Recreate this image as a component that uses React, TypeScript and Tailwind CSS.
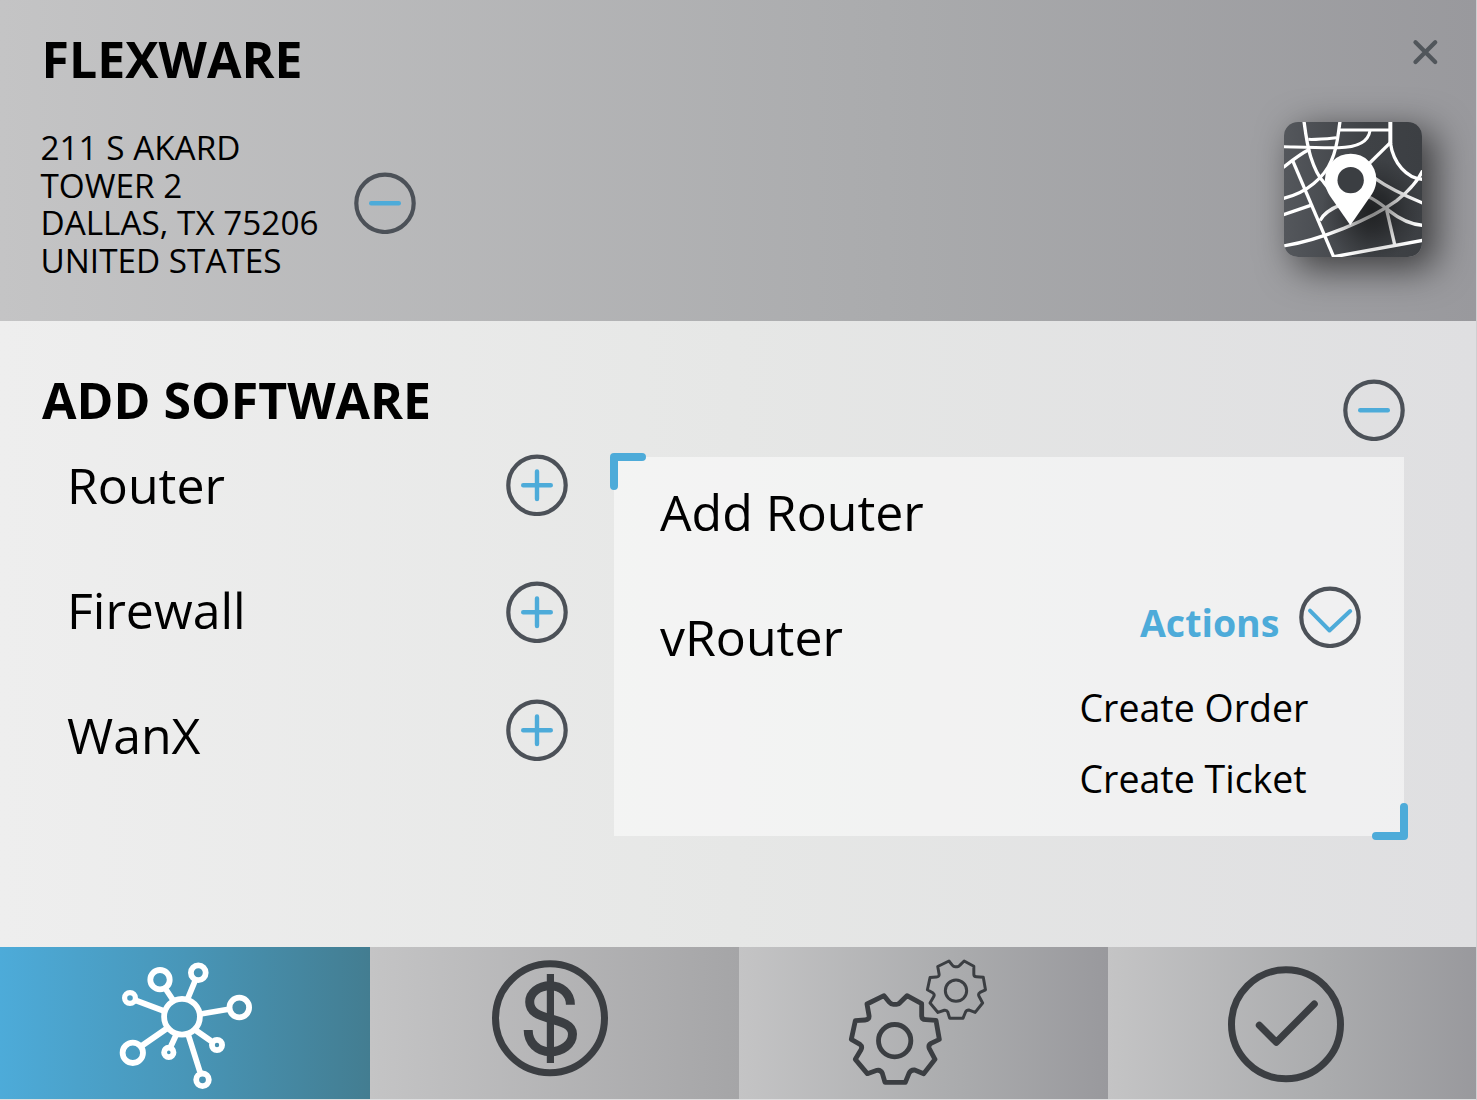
import type { ReactNode } from "react";

const BLUE = "#4dabd9";
const SLATE = "#4c5158";
const INK = "#3b3e42";

function RoundButton({ label, children, className = "" }: { label: string; children: ReactNode; className?: string }) {
  return (
    <button type="button" aria-label={label} className={`block size-[62px] shrink-0 ${className}`}>
      <svg viewBox="0 0 62 62" className="size-full" fill="none" strokeLinecap="round">
        <circle cx="31" cy="31.300" r="28.7" stroke={SLATE} strokeWidth="4.2" />
        <g stroke={BLUE} strokeWidth="4.4">{children}</g>
      </svg>
    </button>
  );
}

const Minus = () => <path d="M17.2 31.300H44.8" />;
const Plus = () => <path d="M17.2 31.300H44.8M31 17.500V45.100" />;

function MapTile() {
  return (
    <div className="h-[135px] w-[138px] overflow-hidden rounded-[14px] shadow-[12px_10px_36px_2px_rgba(0,0,0,0.6)]">
      <svg viewBox="42 36 414 405" preserveAspectRatio="none" className="size-full" fill="none">
        <defs>
          <linearGradient id="tile" x1="0" y1="0" x2="1" y2="0">
            <stop offset="0" stopColor="#54575c" />
            <stop offset="0.6" stopColor="#3f4246" />
            <stop offset="1" stopColor="#3c3f43" />
          </linearGradient>
          <radialGradient id="pinShade">
            <stop offset="0" stopColor="#000" stopOpacity="0.5" />
            <stop offset="0.35" stopColor="#000" stopOpacity="0.36" />
            <stop offset="0.7" stopColor="#000" stopOpacity="0.14" />
            <stop offset="1" stopColor="#000" stopOpacity="0" />
          </radialGradient>
        </defs>
        <rect x="42" y="36" width="414" height="405" fill="url(#tile)" />
        <g stroke="#fff" strokeWidth="10">
          <path d="M102 34C108 80 112 110 122 140C135 180 145 200 160 215C175 235 190 255 200 265" />
          <path d="M210 34C203 80 203 110 185 150C165 200 110 250 40 265" />
          <path d="M208 60H361" strokeWidth="9" />
          <path d="M361 34V102" strokeWidth="12" />
          <path d="M361 98C370 160 410 205 458 208" />
          <path d="M361 98L290 168" />
          <path d="M300 62C295 95 260 112 205 113C150 114 80 111 40 110" strokeWidth="9" />
          <path d="M115 88C145 89 170 86 199 83" strokeWidth="9" />
          <path d="M120 117C95 130 65 152 40 172" />
          <path d="M68 152L192 443" />
          <path d="M40 314L122 286" />
          <path d="M40 408C150 390 300 330 380 272C420 240 445 210 458 182" />
          <path d="M315 205C350 230 400 255 458 279" />
          <path d="M290 258C320 270 340 288 360 304C395 332 425 343 458 346" />
          <path d="M350 300L374 404" />
          <path d="M188 441L458 391" />
          <path d="M150 332C160 310 185 295 215 283" />
        </g>
        <ellipse cx="305" cy="300" rx="150" ry="155" fill="url(#pinShade)" />
        <path d="M241 346L180 258C168 240 165 225 165 208A77 77 0 0 1 319 208C319 228 313 240 306 252Z" fill="#fff" />
        <circle cx="242" cy="210.500" r="39.500" fill={INK} />
      </svg>
    </div>
  );
}

const GEAR =
  "M162 152L178 172Q183 178 190 178H200Q206 178 211 172L231 152L275 176V212Q275 224 287 224L318 226L328 283L303 295Q294 300 298 311L315 343L281 386L254 375Q242 374 237 385L226 412H165L157 385Q152 374 141 376L112 386L76 343L93 314Q98 304 90 298L64 283L76 227L105 225Q119 224 117 211L111 177Z";

const tabs = [
  {
    label: "Network",
    bg: "bg-linear-to-r from-[#4dabd9] via-[#4896b8] to-[#437d91]",
    icon: (
      <svg viewBox="116 958 140 134" className="mt-[11px] ml-[116px] h-[134px] w-[140px]" fill="none" stroke="#fff" strokeWidth="5.8">
        <circle cx="182" cy="1016.700" r="17.900" />
        <circle cx="160" cy="979.700" r="9.700" />
        <circle cx="198.300" cy="972.700" r="7.400" />
        <circle cx="130" cy="998" r="5.400" strokeWidth="5.200" />
        <circle cx="239.300" cy="1007.500" r="9.800" />
        <circle cx="132.800" cy="1052.800" r="10.200" />
        <circle cx="168.800" cy="1052.400" r="4.700" />
        <circle cx="217" cy="1045" r="5.100" />
        <circle cx="202.500" cy="1079.800" r="6.300" />
        <path d="M165 988L173 1000M195 981L188 998M136 1000.500L164 1011M230 1009L200.500 1014M141.500 1046L167.500 1028M171 1046L177 1033M211 1041L196 1030.500M200 1072L188 1034" />
      </svg>
    ),
  },
  {
    label: "Billing",
    bg: "bg-linear-to-r from-[#c4c4c5] to-[#a5a5a7]",
    icon: (
      <svg viewBox="490 958 120 120" className="mt-[11px] ml-[120px] size-[120px]" fill="none" stroke={INK}>
        <circle cx="550" cy="1018.300" r="54.500" strokeWidth="7" />
        <path d="M550.400 974V1063" strokeWidth="7.200" />
        <path
          d="M570.400 1004.700C570.400 993 561 985.800 550 985.800C538.500 985.800 529.700 993 529.700 1002C529.700 1012 538.500 1015.500 550 1018.600C562 1021.800 572.500 1025 572.500 1034C572.500 1044 562.500 1051.800 550 1051.800C538 1051.800 528.200 1043 528.200 1030"
          strokeWidth="9"
        />
      </svg>
    ),
  },
  {
    label: "Settings",
    bg: "bg-linear-to-r from-[#c4c4c5] via-[#aaabad] via-60% to-[#99999d]",
    icon: (
      <svg viewBox="48 39 426 387" className="mt-[11px] ml-[107px] h-[129px] w-[142px]" fill="none" stroke={INK} strokeWidth="14.500" strokeLinejoin="round">
        <path d={GEAR} />
        <circle cx="194" cy="287" r="48.500" />
        <g transform="translate(378 137) scale(0.66) translate(-194 -287)" strokeWidth="13.500">
          <path d={GEAR} />
          <circle cx="194" cy="287" r="48.500" />
        </g>
      </svg>
    ),
  },
  {
    label: "Confirm",
    bg: "bg-linear-to-r from-[#c4c4c5] via-[#aaabad] via-60% to-[#99999d]",
    icon: (
      <svg viewBox="1226 964 120 120" className="mt-[17px] ml-[118px] size-[120px]" fill="none" stroke={INK} strokeWidth="7">
        <circle cx="1286" cy="1024.300" r="54.500" />
        <path d="M1259.300 1025.300L1276.300 1042.300L1314.300 1004" strokeLinecap="round" strokeLinejoin="round" />
      </svg>
    ),
  },
];

export default function App() {
  return (
    <div className="flex h-[1100px] w-[1477px] flex-col overflow-hidden border-r border-[#cfcfd1] bg-[#dededf] font-['Open_Sans',sans-serif] text-black">
      <header className="flex h-[320.5px] shrink-0 justify-between bg-linear-to-r from-[#c4c4c5] via-[#aaabad] via-60% to-[#99999d]">
        <div className="pt-[29px] pl-[41.5px]">
          <h1 className="text-[50px] leading-[60px] font-bold">FLEXWARE</h1>
          <div className="mt-[40px] -ml-px flex">
            <address className="w-[313.500px] text-[33.300px] leading-[37.5px] whitespace-nowrap not-italic">
              211 S AKARD
              <br />
              TOWER 2
              <br />
              DALLAS, TX 75206
              <br />
              UNITED STATES
            </address>
            <RoundButton label="Collapse address" className="mt-[43px]">
              <Minus />
            </RoundButton>
          </div>
        </div>
        <div className="flex flex-col items-end pt-[37px] pr-[54px]">
          <button type="button" aria-label="Close" className="-mr-[18px] size-[30px]">
            <svg viewBox="0 0 30 30" className="size-full" stroke="#51565b" strokeWidth="4.300" strokeLinecap="round">
              <path d="M5.500 5.200L25.200 24.900M25.200 5.200L5.500 24.900" />
            </svg>
          </button>
          <div className="mt-[55px]">
            <MapTile />
          </div>
        </div>
      </header>

      <main className="flex h-[626px] shrink-0 flex-col bg-linear-to-r from-[#eeeeee] via-[#e6e7e6] to-[#dfdfe1]">
        <div className="flex h-[134px] justify-between pr-[71.500px] pl-[42px]">
          <h2 className="pt-[49.300px] text-[50px] leading-[60px] font-bold">ADD SOFTWARE</h2>
          <RoundButton label="Collapse software" className="mt-[58.5px]">
            <Minus />
          </RoundButton>
        </div>
        <div className="flex">
          <ul className="w-[439px] space-y-[65px] pt-[0.500px] pl-[67px] text-[50px] leading-[60px]">
            <li>Router</li>
            <li>Firewall</li>
            <li>WanX</li>
          </ul>
          <div className="-mt-[0.500px] ml-[67px] flex w-[62px] flex-col">
            <RoundButton label="Add router">
              <Plus />
            </RoundButton>
            <RoundButton label="Add firewall" className="mt-[65px]">
              <Plus />
            </RoundButton>
            <RoundButton label="Add WanX" className="mt-[56px]">
              <Plus />
            </RoundButton>
          </div>
          <section className="relative mt-[2.500px] ml-[46px] flex h-[379px] w-[790px] justify-between bg-white/50">
            <svg viewBox="0 0 38 38" className="absolute -top-1 -left-1 size-[38px]" fill="none" stroke={BLUE} strokeWidth="8" strokeLinecap="round" strokeLinejoin="round">
              <path d="M32 4H4V33" />
            </svg>
            <svg viewBox="0 0 38 38" className="absolute -right-1 -bottom-1 size-[38px]" fill="none" stroke={BLUE} strokeWidth="8" strokeLinecap="round" strokeLinejoin="round">
              <path d="M34 5V34H6" />
            </svg>
            <div className="pt-[25px] pl-[46px] text-[50px] leading-[60px]">
              <h3>Add Router</h3>
              <p className="mt-[65px]">vRouter</p>
            </div>
            <div className="w-[324.500px] pt-[129px] text-[37.500px] leading-[48px]">
              <div className="flex pl-[60.500px]">
                <span className="w-[159px] pt-[13px] font-bold text-[#4dabd9]">Actions</span>
                <RoundButton label="Toggle actions">
                  <path d="M11 24.700L30.500 44.500L51.200 25" strokeWidth="4" strokeLinejoin="round" />
                </RoundButton>
              </div>
              <p className="mt-[36px]">Create Order</p>
              <p className="mt-[23px]">Create Ticket</p>
            </div>
          </section>
        </div>
      </main>

      <nav className="grid h-[152.500px] shrink-0 grid-cols-[370px_369px_369px_1fr]">
        {tabs.map((t) => (
          <button key={t.label} type="button" aria-label={t.label} className={`flex items-start ${t.bg}`}>
            {t.icon}
          </button>
        ))}
      </nav>
    </div>
  );
}
